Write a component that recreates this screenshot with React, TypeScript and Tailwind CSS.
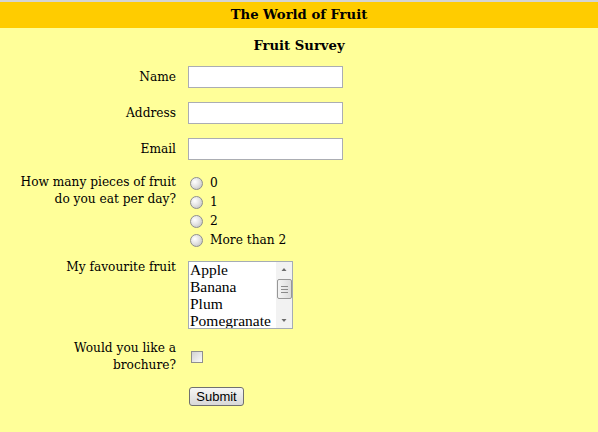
import React from 'react';

const fruits = ['Apple', 'Banana', 'Plum', 'Pomegranate'];
const servings = ['0', '1', '2', 'More than 2'];

const TextRow: React.FC<{ label: string; id: string }> = ({ label, id }) => (
    <div className="flex items-center">
        <label htmlFor={id} className="w-[176px] shrink-0 text-right leading-[17px]">{label}</label>
        <input
            id={id}
            type="text"
            className="ml-3 w-[155px] h-[22px] bg-white border border-[#abadb3] px-1 font-['Liberation_Sans',sans-serif] text-[13px] outline-none"
        />
    </div>
);

export default function App() {
    return (
        <div className="min-h-[432px] bg-[#ffff99] text-black font-['DejaVu_Serif',serif] text-[12.2px] border-t-2 border-[#d4d4d4]">
            <header className="h-[26px] bg-[#ffcc00] flex items-center justify-center">
                <h1 className="font-bold text-[13.2px]">The World of Fruit</h1>
            </header>

            <form className="flex flex-col" onSubmit={e => e.preventDefault()}>
                <h2 className="mt-[9px] h-[18px] leading-[18px] text-center font-bold text-[13.2px]">Fruit Survey</h2>

                <div className="mt-[11px] flex flex-col gap-[14px]">
                    <TextRow label="Name" id="name" />
                    <TextRow label="Address" id="address" />
                    <TextRow label="Email" id="email" />

                    <div className="flex items-start">
                        <div className="w-[176px] shrink-0 text-right leading-[17px]">
                            How many pieces of fruit<br />do you eat per day?
                        </div>
                        <div className="ml-3 flex flex-col">
                            {servings.map(s => (
                                <label key={s} className="h-[19px] flex items-center">
                                    <input
                                        type="radio"
                                        name="servings"
                                        className="appearance-none ml-[2px] w-[13px] h-[13px] rounded-full border border-[#8e8f8f] bg-[radial-gradient(circle_at_35%_35%,#ffffff_0%,#e4e4e4_45%,#b9b9b9_100%)]"
                                        aria-label={s}
                                    />
                                    <span className="ml-[7px] leading-[17px]">{s}</span>
                                </label>
                            ))}
                        </div>
                    </div>
                </div>

                <div className="mt-[11px] flex items-start">
                    <div className="w-[176px] shrink-0 text-right leading-[17px] -mt-[2px]">My favourite fruit</div>
                    <div role="listbox" className="ml-3 w-[105px] h-[68px] bg-white border border-[#a5acb5] flex overflow-hidden">
                        <div className="flex-1 pl-[1px] -mt-[1px] font-['Liberation_Serif',serif] text-[15.5px]">
                            {fruits.map(f => (
                                <div key={f} role="option" className="h-[17px] leading-[17px] whitespace-nowrap">{f}</div>
                            ))}
                        </div>
                        <div className="w-[16px] bg-[#f2f2f2] flex flex-col items-center">
                            <svg width="16" height="16" viewBox="0 0 16 16" className="shrink-0">
                                <path d="M5.5 9 L8 6 L10.5 9 Z" fill="#6b6b6b" />
                            </svg>
                            <div className="mt-[1px] w-[15px] h-[20px] rounded-[2px] border border-[#979797] bg-gradient-to-r from-[#f4f4f4] to-[#dcdcdc] flex flex-col items-center justify-center gap-[2px]">
                                <div className="w-[7px] h-px bg-[#8a8a8a]" />
                                <div className="w-[7px] h-px bg-[#8a8a8a]" />
                                <div className="w-[7px] h-px bg-[#8a8a8a]" />
                            </div>
                            <div className="flex-1" />
                            <svg width="16" height="16" viewBox="0 0 16 16" className="shrink-0">
                                <path d="M5.5 7 L8 10 L10.5 7 Z" fill="#6b6b6b" />
                            </svg>
                        </div>
                    </div>
                </div>

                <div className="mt-[11px] flex items-center">
                    <label htmlFor="brochure" className="w-[176px] shrink-0 text-right leading-[17px]">
                        Would you like a<br />brochure?
                    </label>
                    <input
                        id="brochure"
                        type="checkbox"
                        className="appearance-none ml-[15px] w-[12px] h-[12px] border border-[#8f8f8f] bg-gradient-to-br from-[#d2d2d2] to-[#fbfbfb]"
                    />
                </div>

                <div className="mt-[13px] flex">
                    <div className="w-[176px] shrink-0" />
                    <button
                        type="submit"
                        className="ml-[13px] w-[55px] h-[19px] rounded-[3px] border border-[#707070] bg-gradient-to-b from-[#f6f6f6] to-[#d8d8d8] font-['Liberation_Sans',sans-serif] text-[13px] leading-[17px]"
                    >
                        Submit
                    </button>
                </div>
            </form>
        </div>
    );
}
